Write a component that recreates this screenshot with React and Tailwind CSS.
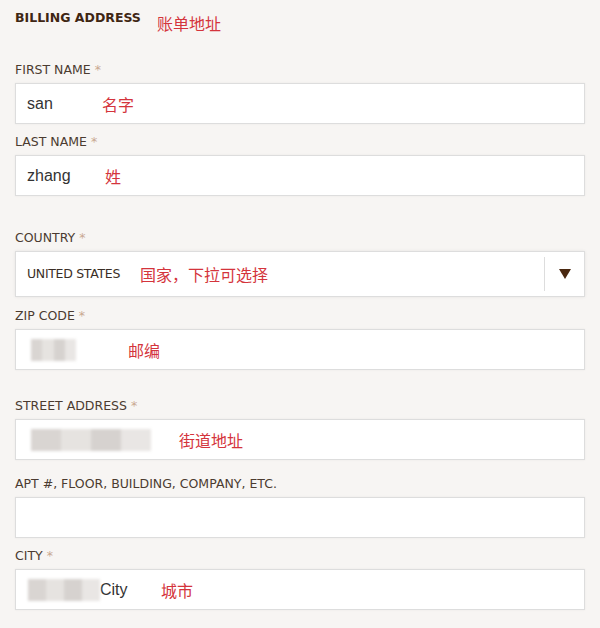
import React from 'react';

const labelFont = { fontFamily: '"DejaVu Sans", Verdana, sans-serif' };

function Note({ children, left, className = 'top-1/2 -translate-y-1/2' }) {
  return (
    <span
      className={`absolute text-[16px] text-[#d4343c] font-['Noto_Sans_CJK_SC',sans-serif] leading-none ${className}`}
      style={{ left }}
    >
      {children}
    </span>
  );
}

function Smudge({ width }) {
  return (
    <span className="flex h-[22px] blur-[1.5px]" style={{ width }}>
      <span className="flex-1 bg-[#d9d5d2]" />
      <span className="flex-1 bg-[#e6e3e0]" />
      <span className="flex-1 bg-[#d6d2cf]" />
      <span className="flex-1 bg-[#e9e6e4]" />
    </span>
  );
}

function Label({ text, required = true, className = '' }) {
  return (
    <div
      className={`text-[12.5px] leading-[16px] text-[#4b3b30] ${className}`}
      style={labelFont}
    >
      {text}
      {required && <span className="text-[#c9a891] ml-[4px]">*</span>}
    </div>
  );
}

function Field({ children, className = '' }) {
  return (
    <div
      className={`relative mt-[5px] h-[41px] bg-white border border-[#dddddd] shadow-[0_0_2px_rgba(0,0,0,0.06)] flex items-center pl-[11px] font-['Liberation_Sans',Arial,sans-serif] text-[16px] text-[#333] ${className}`}
    >
      {children}
    </div>
  );
}

export default function App() {
  return (
    <div className="w-[600px] h-[628px] bg-[#f7f5f3] px-[15px] overflow-hidden">
      <div className="relative pt-[10px] h-[62px]">
        <div
          className="text-[12.5px] font-bold leading-[16px] text-[#3f2613]"
          style={labelFont}
        >
          BILLING ADDRESS
        </div>
        <Note left={142} className="top-[15px]">账单地址</Note>
      </div>

      <Label text="FIRST NAME" />
      <Field>
        <span>san</span>
        <Note left={86}>名字</Note>
      </Field>

      <Label text="LAST NAME" className="mt-[10px]" />
      <Field>
        <span>zhang</span>
        <Note left={89}>姓</Note>
      </Field>

      <Label text="COUNTRY" className="mt-[34px]" />
      <div className="relative mt-[5px] h-[46px] bg-white border border-[#dddddd] shadow-[0_0_3px_rgba(0,0,0,0.08)] flex items-center pl-[11px]">
        <span className="text-[12.5px] text-[#3a2e26] tracking-[-0.3px]" style={labelFont}>
          UNITED STATES
        </span>
        <Note left={124}>国家，下拉可选择</Note>
        <div className="ml-auto h-[34px] w-px bg-[#dddddd]" />
        <div className="w-[39px] flex justify-center">
          <svg width="12" height="10" viewBox="0 0 12 10">
            <path d="M0 0 L12 0 L6 10 Z" fill="#4a2810" />
          </svg>
        </div>
      </div>

      <Label text="ZIP CODE" className="mt-[11px]" />
      <Field className="pl-[15px]">
        <Smudge width={45} />
        <Note left={112}>邮编</Note>
      </Field>

      <Label text="STREET ADDRESS" className="mt-[28px]" />
      <Field className="pl-[15px]">
        <Smudge width={120} />
        <Note left={163}>街道地址</Note>
      </Field>

      <Label text="APT #, FLOOR, BUILDING, COMPANY, ETC." required={false} className="mt-[16px]" />
      <Field />

      <Label text="CITY" className="mt-[10px]" />
      <Field className="pl-[12px]">
        <Smudge width={72} />
        <span>City</span>
        <Note left={145}>城市</Note>
      </Field>
    </div>
  );
}
